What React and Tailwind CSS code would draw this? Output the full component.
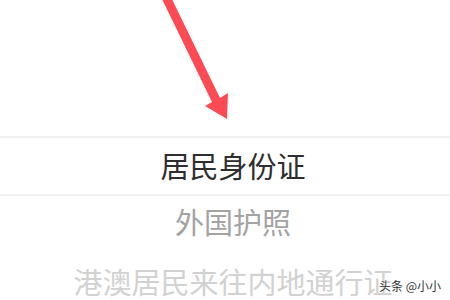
export default function App() {
  const font = { fontFamily: '"Noto Sans CJK SC", "Noto Sans", sans-serif' };

  return (
    <div className="relative w-[450px] h-[300px] overflow-hidden bg-white" style={font}>
      {/* arrow pointing at the first option */}
      <div className="h-[136px]">
        <svg width="450" height="136" viewBox="0 0 450 136" className="block">
          <polygon
            points="161,-3 169,-7 220,98 228,93 227,119 205,106 212,102"
            fill="#fc4b52"
          />
        </svg>
      </div>

      <div className="h-[2px] bg-[#f1f1f1]" />

      <div className="flex h-[56px] items-center justify-center pl-[16px] text-[29px] text-[#2e2e2e]">
        居民身份证
      </div>

      <div className="h-[2px] bg-[#f1f1f1]" />

      <div className="flex h-[52px] items-center justify-center pl-[16px] text-[29px] text-[#a3a3a3]">
        外国护照
      </div>

      <div className="flex h-[68px] items-center justify-center pl-[16px] text-[29px] text-[#d2d2d2] whitespace-nowrap">
        港澳居民来往内地通行证
      </div>

      <div className="absolute right-[9px] bottom-[8px] text-[12px] leading-none text-[#333] [text-shadow:0_0_2px_#fff]">
        头条 @小小
      </div>
    </div>
  );
}
